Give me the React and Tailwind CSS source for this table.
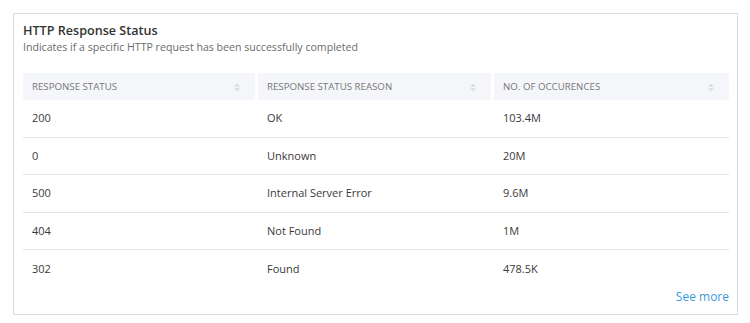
const rows = [
  { status: "200", reason: "OK", count: "103.4M" },
  { status: "0", reason: "Unknown", count: "20M" },
  { status: "500", reason: "Internal Server Error", count: "9.6M" },
  { status: "404", reason: "Not Found", count: "1M" },
  { status: "302", reason: "Found", count: "478.5K" },
];

const columns = ["Response Status", "Response Status Reason", "No. of Occurences"];

function SortIcon() {
  return (
    <svg width="6" height="9" viewBox="0 0 6 9" className="shrink-0">
      <path d="M3 0.5 L6 3.8 H0 Z" fill="#d8dce2" />
      <path d="M3 8.5 L6 5.2 H0 Z" fill="#d8dce2" />
    </svg>
  );
}

export default function App() {
  return (
    <div className="p-[13px] bg-white" style={{ fontFamily: '"Open Sans", sans-serif' }}>
      <div className="w-[725px] h-[302px] border border-[#dcdcdc] bg-white px-[9px] pt-[9px] flex flex-col">
        <h3 className="text-[12.6px] leading-[16px] font-semibold text-[#333]">HTTP Response Status</h3>
        <p className="text-[10.6px] leading-[16px] text-[#6b6b6b]">
          Indicates if a specific HTTP request has been successfully completed
        </p>

        <div className="mt-[18px] w-[706px]">
          <div className="grid grid-cols-[232px_233px_235px] gap-x-[3px] h-[27px]">
            {columns.map((col) => (
              <div key={col} className="bg-[#f4f6f9] flex items-center justify-between pl-[9px] pr-[15px] pt-[1px]">
                <span className="text-[9.7px] uppercase text-[#777]">{col}</span>
                <SortIcon />
              </div>
            ))}
          </div>
          {rows.map((row, i) => (
            <div
              key={row.status}
              className={
                "grid grid-cols-[232px_233px_235px] gap-x-[3px] h-[37.5px] items-center text-[11px] text-[#3a3a3a] " +
                (i < rows.length - 1 ? "border-b border-[#e4e4e4]" : "")
              }
            >
              <span className="pl-[9px]">{row.status}</span>
              <span className="pl-[9px]">{row.reason}</span>
              <span className="pl-[9px]">{row.count}</span>
            </div>
          ))}
        </div>

        <div className="flex justify-end w-[706px]">
          <a className="text-[12px] text-[#3a9ad9] cursor-pointer">See more</a>
        </div>
      </div>
    </div>
  );
}
